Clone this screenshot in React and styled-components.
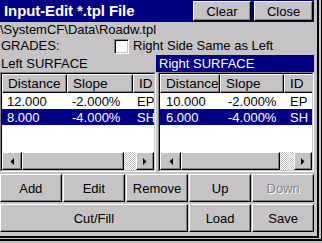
import React from 'react';
import styled, { createGlobalStyle, css } from 'styled-components';

const GREY = '#c6c3c6';
const DARK = '#848284';
const NAVY = '#000084';

const Global = createGlobalStyle`
  html, body { margin: 0; padding: 0; background: ${GREY}; }
  body {
    font-family: "Liberation Sans", Arial, sans-serif;
    font-size: 13px;
    color: #000;
  }
  * { box-sizing: border-box; }
`;

const raised = css`
  background: ${GREY};
  border: 1px solid;
  border-color: #fff #000 #000 #fff;
  box-shadow: inset -1px -1px 0 ${DARK};
`;

const Screen = styled.div`
  width: 322px;
  height: 243px;
  background: ${GREY};
  overflow: hidden;
`;

const FrameOuter = styled.div`
  display: inline-block;
  padding: 0 2px 1px 0;
  border-right: 1px solid #000;
  border-bottom: 2px solid #000;
`;

const FrameInner = styled.div`
  padding: 0 3px 1px 0;
  border-right: 2px solid #000;
  border-bottom: 2px solid #000;
`;

const Window = styled.div`
  width: 314px;
  height: 235px;
  display: flex;
  flex-direction: column;
`;

const TitleBar = styled.div`
  height: 22px;
  background: ${NAVY};
  display: flex;
  align-items: flex-start;
  justify-content: space-between;
`;

const Title = styled.div`
  color: #fff;
  font-weight: bold;
  font-size: 15px;
  line-height: 22px;
  padding-left: 4px;
  letter-spacing: -0.1px;
`;

const TitleButtons = styled.div`
  display: flex;
  gap: 3px;
  padding-top: 1px;
  padding-right: 1px;
`;

const TitleButton = styled.div`
  ${raised};
  width: ${p => p.$w}px;
  height: 20px;
  display: flex;
  align-items: center;
  justify-content: center;
  padding-top: 1px;
  font-size: 13px;
`;

const PathLine = styled.div`
  height: 15px;
  line-height: 15px;
  white-space: nowrap;
`;

const GradesRow = styled.div`
  height: 18px;
  display: flex;
  align-items: center;
  padding-left: 1px;
`;

const GradesLabel = styled.span`
  width: 113px;
  line-height: 18px;
`;

const CheckBox = styled.span`
  width: 15px;
  height: 15px;
  background: #fff;
  border: 1px solid;
  border-color: ${DARK} #fff #fff ${DARK};
  box-shadow: inset 1px 1px 0 #000, inset -1px -1px 0 ${GREY};
  margin-right: 4px;
`;

const CheckLabel = styled.span`
  line-height: 18px;
  white-space: nowrap;
`;

const SurfaceRow = styled.div`
  height: 17px;
  display: grid;
  grid-template-columns: 156px 158px;
`;

const SurfaceLabel = styled.div`
  line-height: 17px;
  padding-left: ${p => (p.$active ? 3 : 1)}px;
  background: ${p => (p.$active ? NAVY : 'transparent')};
  color: ${p => (p.$active ? '#fff' : '#000')};
  white-space: nowrap;
`;

const ListsRow = styled.div`
  display: grid;
  grid-template-columns: 156px 156px;
  gap: 2px;
  height: 100px;
`;

const ListBox = styled.div`
  border: 1px solid;
  border-color: ${DARK} #fff #fff ${DARK};
  height: 100px;
`;

const ListFrame = styled.div`
  border: 1px solid;
  border-color: #000 ${GREY} ${GREY} #000;
  height: 98px;
  display: flex;
  flex-direction: column;
  overflow: hidden;
`;

const HeaderRow = styled.div`
  display: flex;
  height: 19px;
  flex: none;
`;

const HeaderCell = styled.div`
  ${raised};
  flex: none;
  width: ${p => p.$w}px;
  height: 19px;
  line-height: 17px;
  font-size: 13.5px;
  padding-left: 5px;
  white-space: nowrap;
  overflow: hidden;
`;

const Body = styled.div`
  flex: 1;
  background: #fff;
  overflow: hidden;
`;

const Row = styled.div`
  display: flex;
  height: 16px;
  background: ${p => (p.$selected ? NAVY : '#fff')};
  color: ${p => (p.$selected ? '#fff' : '#000')};
`;

const Cell = styled.div`
  flex: none;
  width: ${p => p.$w}px;
  padding: 1px 0 0 ${p => p.$pad ?? 5}px;
  line-height: 16px;
  white-space: nowrap;
  overflow: hidden;
`;

const ScrollBar = styled.div`
  flex: none;
  height: 18px;
  display: flex;
`;

const ScrollArrow = styled.div`
  ${raised};
  flex: none;
  width: ${p => p.$w}px;
  height: 18px;
  display: flex;
  align-items: center;
  justify-content: center;
`;

const Thumb = styled.div`
  ${raised};
  flex: none;
  width: ${p => p.$w}px;
  height: 18px;
`;

const Track = styled.div`
  flex: 1;
  background-color: ${GREY};
  background-image: conic-gradient(#fff 25%, ${GREY} 0 50%, #fff 0 75%, ${GREY} 0);
  background-size: 2px 2px;
`;

const ButtonGrid = styled.div`
  margin-top: 2px;
  display: grid;
  grid-template-columns: repeat(5, 1fr);
  grid-auto-rows: 28px;
  gap: 2px 1.5px;
`;

const ActionButton = styled.div`
  ${raised};
  grid-column: span ${p => p.$span || 1};
  display: flex;
  align-items: center;
  justify-content: center;
  color: ${p => (p.$disabled ? DARK : '#000')};
  text-shadow: ${p => (p.$disabled ? '1px 1px 0 #fff' : 'none')};
`;

const Arrow = ({ dir }) => (
  <svg width="4" height="7" viewBox="0 0 4 7">
    {dir === 'left' ? (
      <polygon points="4,0 4,7 0.5,3.5" fill="#000" />
    ) : (
      <polygon points="0,0 0,7 3.5,3.5" fill="#000" />
    )}
  </svg>
);

const SurfaceList = ({ cols, rows, thumb, leftArrow, rightArrow }) => (
  <ListBox>
    <ListFrame>
      <HeaderRow>
        {cols.map(c => (
          <HeaderCell key={c.label} $w={c.w}>{c.label}</HeaderCell>
        ))}
      </HeaderRow>
      <Body>
        {rows.map((r, i) => (
          <Row key={i} $selected={r.selected}>
            {r.values.map((v, j) => (
              <Cell key={j} $w={cols[j].w} $pad={cols[j].pad}>{v}</Cell>
            ))}
          </Row>
        ))}
      </Body>
      <ScrollBar>
        <ScrollArrow $w={leftArrow}><Arrow dir="left" /></ScrollArrow>
        <Thumb $w={thumb} />
        <Track />
        <ScrollArrow $w={rightArrow}><Arrow dir="right" /></ScrollArrow>
      </ScrollBar>
    </ListFrame>
  </ListBox>
);

const leftCols = [
  { label: 'Distance', w: 65, pad: 5 },
  { label: 'Slope', w: 66, pad: 5 },
  { label: 'ID', w: 40, pad: 4 },
];
const rightCols = [
  { label: 'Distance', w: 60, pad: 6 },
  { label: 'Slope', w: 64, pad: 8 },
  { label: 'ID', w: 40, pad: 6 },
];

export default function App() {
  return (
    <Screen>
      <Global />
      <FrameOuter>
        <FrameInner>
          <Window>
            <TitleBar>
              <Title>Input-Edit *.tpl File</Title>
              <TitleButtons>
                <TitleButton $w={58}>Clear</TitleButton>
                <TitleButton $w={59}>Close</TitleButton>
              </TitleButtons>
            </TitleBar>
            <PathLine>\SystemCF\Data\Roadw.tpl</PathLine>
            <GradesRow>
              <GradesLabel>GRADES:</GradesLabel>
              <CheckBox />
              <CheckLabel>Right Side Same as Left</CheckLabel>
            </GradesRow>
            <SurfaceRow>
              <SurfaceLabel>Left SURFACE</SurfaceLabel>
              <SurfaceLabel $active>Right SURFACE</SurfaceLabel>
            </SurfaceRow>
            <ListsRow>
              <SurfaceList
                cols={leftCols}
                thumb={102}
                leftArrow={20}
                rightArrow={18}
                rows={[
                  { values: ['12.000', '-2.000%', 'EP'] },
                  { values: ['8.000', '-4.000%', 'SH'], selected: true },
                ]}
              />
              <SurfaceList
                cols={rightCols}
                thumb={99}
                leftArrow={21}
                rightArrow={18}
                rows={[
                  { values: ['10.000', '-2.000%', 'EP'] },
                  { values: ['6.000', '-4.000%', 'SH'], selected: true },
                ]}
              />
            </ListsRow>
            <ButtonGrid>
              <ActionButton>Add</ActionButton>
              <ActionButton>Edit</ActionButton>
              <ActionButton>Remove</ActionButton>
              <ActionButton>Up</ActionButton>
              <ActionButton $disabled>Down</ActionButton>
              <ActionButton $span={3}>Cut/Fill</ActionButton>
              <ActionButton>Load</ActionButton>
              <ActionButton>Save</ActionButton>
            </ButtonGrid>
          </Window>
        </FrameInner>
      </FrameOuter>
    </Screen>
  );
}
